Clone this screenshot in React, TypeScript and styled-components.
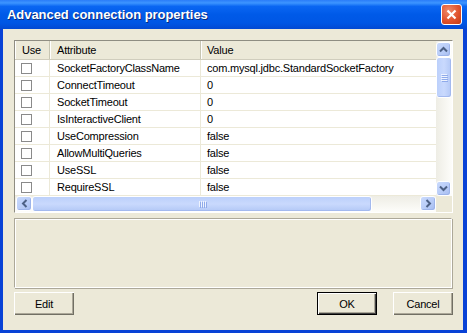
import React from "react";
import styled, { createGlobalStyle } from "styled-components";

const GlobalStyle = createGlobalStyle`
  html, body {
    margin: 0;
    padding: 0;
    background: #ece9d8;
  }
  * {
    box-sizing: border-box;
  }
`;

const Window = styled.div`
  width: 467px;
  height: 333px;
  display: flex;
  flex-direction: column;
  background: #0842d6;
  font-family: "Liberation Sans", Arial, sans-serif;
  font-size: 11px;
  letter-spacing: -0.2px;
  color: #000;
`;

const TitleBar = styled.div`
  height: 29px;
  flex: none;
  display: flex;
  align-items: center;
  justify-content: space-between;
  padding: 0 5px 0 7px;
  background: linear-gradient(
    to bottom,
    #2a7cf8 0%,
    #3d95ff 10%,
    #0a66f2 22%,
    #005ae8 50%,
    #0056e4 80%,
    #0349d2 100%
  );
`;

const Title = styled.span`
  color: #fff;
  font-weight: bold;
  font-size: 13px;
  text-shadow: 1px 1px 0 #0a2a7a;
  letter-spacing: -0.05px;
`;

const CloseButton = styled.div`
  width: 21px;
  height: 21px;
  border: 1px solid #fff;
  border-radius: 3px;
  background: radial-gradient(circle at 35% 30%, #f08a6a 0%, #e0532e 55%, #c23a14 100%);
  display: flex;
  align-items: center;
  justify-content: center;
`;

const Body = styled.div`
  flex: 1;
  margin: 0 4px 3px 3px;
  background: #ece9d8;
  padding: 11px 10px 15px 11px;
  display: flex;
  flex-direction: column;
`;

const ListBox = styled.div`
  height: 173px;
  flex: none;
  border: 1px solid;
  border-color: #8f8d82 #fff #fff #8f8d82;
  background: #fff;
  display: grid;
  grid-template-columns: 421px 16px;
  grid-template-rows: 155px 16px;
`;

const Content = styled.div`
  overflow: hidden;
  display: flex;
  flex-direction: column;
`;

const Row = styled.div<{ $head?: boolean }>`
  display: grid;
  grid-template-columns: 35px 151px 1fr;
  height: ${(p) => (p.$head ? "19px" : "17px")};
  background: ${(p) => (p.$head ? "#ece9d8" : "#fff")};
  border-bottom: 1px solid ${(p) => (p.$head ? "#d0cdbd" : "#ece9d8")};
  flex: none;
`;

const Cell = styled.div<{ $head?: boolean; $pad?: number }>`
  display: flex;
  align-items: center;
  padding-left: ${(p) => p.$pad ?? 7}px;
  white-space: nowrap;
  overflow: hidden;
  border-right: 1px solid ${(p) => (p.$head ? "#c7c5b2" : "#ece9d8")};
  box-shadow: ${(p) => (p.$head ? "inset 1px 0 0 #fff" : "none")};
  &:last-child {
    border-right: none;
  }
`;

const Check = styled.span`
  width: 11px;
  height: 11px;
  border: 1px solid #8a8a8a;
  background: #fff;
  display: block;
`;

const VScroll = styled.div`
  grid-row: 1;
  grid-column: 2;
  display: flex;
  flex-direction: column;
  background: linear-gradient(to right, #eeede5, #fdfdfa);
  padding-top: 1px;
`;

const HScroll = styled.div`
  grid-row: 2;
  grid-column: 1;
  display: flex;
  align-items: stretch;
  background: linear-gradient(to bottom, #eeede5, #fdfdfa);
  padding-left: 1px;
`;

const Corner = styled.div`
  grid-row: 2;
  grid-column: 2;
  background: #ece9d8;
`;

const ArrowButton = styled.div<{ $wide?: boolean }>`
  width: ${(p) => (p.$wide ? "16px" : "15px")};
  height: 15px;
  flex: none;
  border: 1px solid #fff;
  border-radius: 3px;
  background: linear-gradient(135deg, #c9dafd 0%, #b7cbf7 60%, #a6bcef 100%);
  box-shadow: inset -1px -1px 0 #9db4ea;
  display: flex;
  align-items: center;
  justify-content: center;
`;

const Thumb = styled.div<{ $vertical?: boolean }>`
  border: 1px solid #fff;
  border-radius: 3px;
  background: ${(p) =>
    p.$vertical
      ? "linear-gradient(to right, #bcd0fb, #c9d9fd 50%, #b3c8f6)"
      : "linear-gradient(to bottom, #bcd0fb, #c9d9fd 50%, #b3c8f6)"};
  box-shadow: inset -1px -1px 0 #a3b9ee;
  display: flex;
  align-items: center;
  justify-content: center;
  flex: none;
  width: ${(p) => (p.$vertical ? "auto" : "340px")};
  height: ${(p) => (p.$vertical ? "41px" : "auto")};
`;

const Grip = styled.div<{ $vertical?: boolean }>`
  display: flex;
  flex-direction: ${(p) => (p.$vertical ? "column" : "row")};
  gap: 1px;
  & > span {
    display: block;
    background: #eef3fe;
    box-shadow: 1px 1px 0 #8faaea;
    width: ${(p) => (p.$vertical ? "6px" : "1px")};
    height: ${(p) => (p.$vertical ? "1px" : "6px")};
  }
`;

const Spacer = styled.div`
  flex: 1;
`;

const InfoPanel = styled.div`
  margin-top: 5px;
  height: 70px;
  flex: none;
  border: 1px solid;
  border-color: #aca899 #fff #fff #aca899;
  box-shadow: inset 1px 1px 0 #fff, 1px 1px 0 #aca899;
  width: 438px;
`;

const ButtonRow = styled.div`
  margin-top: 4px;
  display: flex;
  gap: 16px;
`;

const Button = styled.div<{ $default?: boolean }>`
  width: 60px;
  height: 23px;
  display: flex;
  align-items: center;
  justify-content: center;
  background: #ece9d8;
  border: ${(p) => (p.$default ? "1px solid #000" : "none")};
  box-shadow: ${(p) =>
    p.$default
      ? "inset 1px 1px 0 #fff, inset -1px -1px 0 #404040, inset -2px -2px 0 #aca899"
      : "inset 1px 1px 0 #fff, inset -1px -1px 0 #716f64, inset -2px -2px 0 #aca899"};
  font-size: 11px;
`;

const rows: [string, string][] = [
  ["SocketFactoryClassName", "com.mysql.jdbc.StandardSocketFactory"],
  ["ConnectTimeout", "0"],
  ["SocketTimeout", "0"],
  ["IsInteractiveClient", "0"],
  ["UseCompression", "false"],
  ["AllowMultiQueries", "false"],
  ["UseSSL", "false"],
  ["RequireSSL", "false"],
];

const Chevron = ({ dir }: { dir: "up" | "down" | "left" | "right" }) => {
  const rot = { up: 0, right: 90, down: 180, left: 270 }[dir];
  return (
    <svg width="9" height="9" viewBox="0 0 9 9" style={{ transform: `rotate(${rot}deg)` }}>
      <path d="M1 6.5 L4.5 3 L8 6.5" fill="none" stroke="#4d6185" strokeWidth="2" />
    </svg>
  );
};

const grip = (vertical?: boolean) => (
  <Grip $vertical={vertical}>
    <span />
    <span />
    <span />
    <span />
  </Grip>
);

export default function App() {
  return (
    <>
      <GlobalStyle />
      <Window>
        <TitleBar>
          <Title>Advanced connection properties</Title>
          <CloseButton>
            <svg width="11" height="11" viewBox="0 0 11 11">
              <path d="M1.5 1.5 L9.5 9.5 M9.5 1.5 L1.5 9.5" stroke="#fff" strokeWidth="2.2" />
            </svg>
          </CloseButton>
        </TitleBar>
        <Body>
          <ListBox>
            <Content>
              <Row $head>
                <Cell $head>Use</Cell>
                <Cell $head>Attribute</Cell>
                <Cell $head $pad={6}>Value</Cell>
              </Row>
              {rows.map(([name, value]) => (
                <Row key={name}>
                  <Cell $pad={6}>
                    <Check />
                  </Cell>
                  <Cell>{name}</Cell>
                  <Cell $pad={6}>{value}</Cell>
                </Row>
              ))}
            </Content>
            <VScroll>
              <ArrowButton>
                <Chevron dir="up" />
              </ArrowButton>
              <Thumb $vertical>{grip(true)}</Thumb>
              <Spacer />
              <ArrowButton>
                <Chevron dir="down" />
              </ArrowButton>
            </VScroll>
            <HScroll>
              <ArrowButton $wide>
                <Chevron dir="left" />
              </ArrowButton>
              <Thumb>{grip()}</Thumb>
              <Spacer />
              <ArrowButton $wide>
                <Chevron dir="right" />
              </ArrowButton>
            </HScroll>
            <Corner />
          </ListBox>
          <InfoPanel />
          <ButtonRow>
            <Button>Edit</Button>
            <Spacer />
            <Button $default>OK</Button>
            <Button>Cancel</Button>
          </ButtonRow>
        </Body>
      </Window>
    </>
  );
}
